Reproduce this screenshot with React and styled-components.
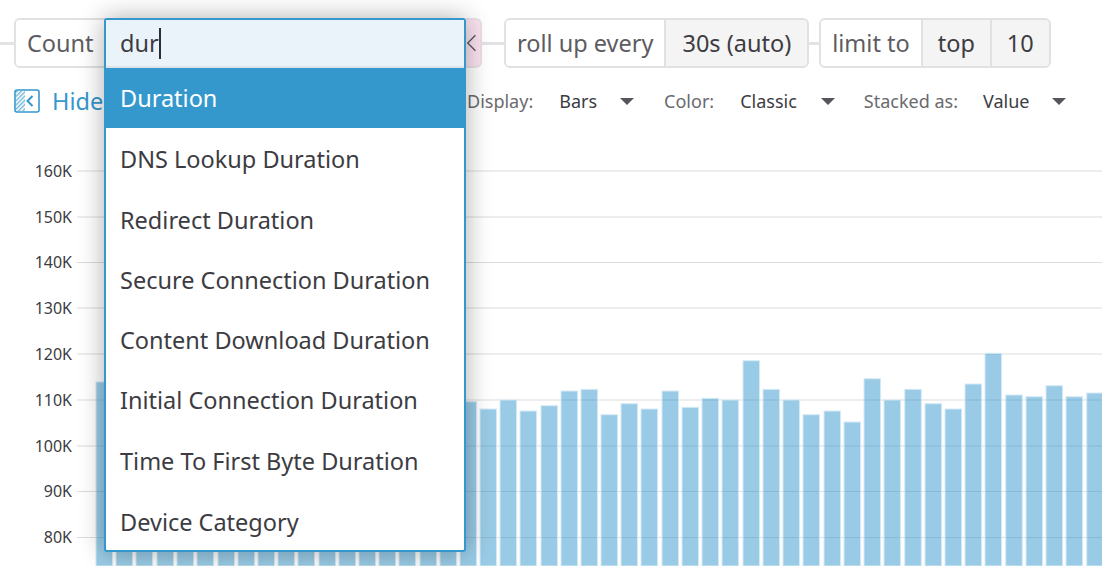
import React from 'react';
import styled, { createGlobalStyle } from 'styled-components';

const Global = createGlobalStyle`
  html, body { margin: 0; padding: 0; background: #fff; }
  body { width: 1102px; height: 566px; overflow: hidden; font-family: "Noto Sans", "Open Sans", sans-serif; color: #3c3c42; }
`;
const Page = styled.div`position: relative; width: 1102px; height: 566px; overflow: hidden; padding-top: 18px; box-sizing: border-box;`;
const QueryRow = styled.div`display: flex; align-items: center; height: 50px;`;
const Connector = styled.span`display: block; width: ${p => p.$w}px; height: 3px; background: #e3e3e6;`;
const Group = styled.div`display: flex; height: 50px; box-sizing: border-box; border: 2px solid #e1e1e4; border-radius: 6px; overflow: hidden; font-size: 23.5px; flex: ${p => p.$grow ? '0 0 ' + p.$grow + 'px' : 'none'};`;
const Label = styled.div`display: flex; align-items: center; padding: 0 11px; color: #5c5c62; background: ${p => p.$pink ? '#fbe3f0' : '#fff'};`;
const Value = styled.div`display: flex; align-items: center; padding: 0 ${p => p.$pad || 16}px; background: #f4f4f4; color: #3c3c42; border-left: 2px solid #e1e1e4;`;
const PinkTab = styled.div`display: flex; align-items: center; justify-content: flex-end; width: 16px; height: 50px; box-sizing: border-box; background: #fbe3f0; border: 2px solid #ecdfe8; border-left: 0; border-radius: 0 6px 6px 0; color: #55555c; padding-right: 2px;`;
const OptionsRow = styled.div`display: flex; align-items: center; height: 24px; margin-top: 21px; font-size: 18px; white-space: nowrap;`;
const HideButton = styled.div`display: flex; align-items: center; margin-left: 14px; width: 453px; color: #3498cd; font-size: 23.5px;`;
const HideIcon = styled.svg`width: 26px; height: 24px; margin-right: 12px; flex: none;`;
const OptName = styled.span`color: #6a6a70; margin-right: ${p => p.$gap}px;`;
const OptValue = styled.span`color: #3c3c42; margin-right: ${p => p.$gap}px;`;
const Caret = styled.span`flex: none; width: 0; height: 0; border-left: 7.5px solid transparent; border-right: 7.5px solid transparent; border-top: 7px solid #55555c; margin-right: ${p => p.$gap}px;`;
const Chart = styled.svg`display: block; position: absolute; left: 0; top: 0; pointer-events: none;`;
const AxisLabel = styled.text`font-size: 16px; fill: #3c3c42; text-anchor: end; font-family: "Noto Sans", sans-serif;`;
const Menu = styled.div`position: absolute; left: 104px; top: 18px; width: 362px; height: 534px; box-sizing: border-box; border: 2px solid #3498cd; border-radius: 3px; background: #fff; box-shadow: 0 0 26px rgba(0,0,0,.32); z-index: 2; font-size: 23.5px; display: flex; flex-direction: column;`;
const SearchBox = styled.div`flex: none; display: flex; align-items: center; height: 48px; box-sizing: border-box; padding-left: 14px; background: #ebf3fa; border-bottom: 2px solid #dfe3e8;`;
const Cursor = styled.span`display: inline-block; width: 2px; height: 31px; background: #2c2c32; margin-left: 0;`;
const Option = styled.div`flex: none; display: flex; align-items: center; height: ${p => p.$h || 60}px; padding-left: 14px; color: ${p => p.$active ? '#fff' : '#3c3c42'}; background: ${p => p.$active ? '#3498cd' : 'transparent'};`;

const bars = [[96,382],[116,400],[136,400],[157,400],[177,400],[197,400],[218,400],[238,400],[258,400],[278,400],[298,400],[319,400],[339,400],[359,400],[379,400],[399,400],[420,400],[440,400],[460,401.7],[480,409],[500,400],[520,411],[541,405.7],[561,391],[581,389.3],[601,414.7],[621,403.7],[641,409],[662,391],[682,407.3],[702,398.3],[722,400],[743,360.7],[763,389.3],[783,400],[803,414.7],[824,411],[844,422],[864,378.7],[884,400],[904.7,389.3],[925,403.7],[945,409],[965,384],[985,353.3],[1005.7,395],[1026,396.7],[1046,385.7],[1066,396.7],[1086.7,393]];
const ticks = [['160K',171],['150K',217],['140K',262.5],['130K',308],['120K',354],['110K',400],['100K',446],['90K',491.5],['80K',537.5]];
const options = [['DNS Lookup Duration',62],['Redirect Duration',60],['Secure Connection Duration',60],['Content Download Duration',60],['Initial Connection Duration',60],['Time To First Byte Duration',62],['Device Category',60]];

export default function App() {
  return (
    <Page>
      <Global />
      <Chart width="1102" height="566" viewBox="0 0 1102 566">
        {ticks.map(([l, y]) => (
          <g key={l}>
            <line x1="77" x2="1102" y1={y} y2={y} stroke="#dcdcdc" strokeWidth="1.2" />
            <AxisLabel x="72" y={y + 5.5}>{l}</AxisLabel>
          </g>
        ))}
        {bars.map(([x, y]) => (
          <rect key={x} x={x} y={y} width="16.6" height={566 - y} fill="#3498cd" fillOpacity=".5" stroke="#d6eaf5" strokeWidth="1" />
        ))}
      </Chart>
      <QueryRow style={{ position: 'relative' }}>
        <Connector $w={14} />
        <Group $grow={452}><Label>Count</Label></Group>
        <PinkTab>
          <svg width="14" height="24" viewBox="0 0 14 24"><path d="M11 3 L2 12 L11 21" fill="none" stroke="#55555c" strokeWidth="1.5" /></svg>
        </PinkTab>
        <Connector $w={22} />
        <Group><Label>roll up every</Label><Value>30s (auto)</Value></Group>
        <Connector $w={10} />
        <Group><Label>limit to</Label><Value $pad={15}>top</Value><Value $pad={15}>10</Value></Group>
      </QueryRow>
      <OptionsRow style={{ position: 'relative' }}>
        <HideButton>
          <HideIcon viewBox="0 0 26 24">
            <defs><pattern id="h" width="3" height="3" patternUnits="userSpaceOnUse" patternTransform="rotate(45)"><rect width="1.4" height="3" fill="#3498cd" fillOpacity=".7" /></pattern></defs>
            <rect x="1" y="1" width="24" height="22" rx="2" fill="#fff" stroke="#3498cd" strokeWidth="1.6" />
            <rect x="2" y="2" width="9" height="20" fill="url(#h)" />
            <path d="M18.5 7 L13.5 12 L18.5 17" fill="none" stroke="#3498cd" strokeWidth="2" />
          </HideIcon>
          Hide
        </HideButton>
        <OptName $gap={26}>Display:</OptName><OptValue $gap={23}>Bars</OptValue><Caret $gap={30} />
        <OptName $gap={26}>Color:</OptName><OptValue $gap={24}>Classic</OptValue><Caret $gap={29} />
        <OptName $gap={25}>Stacked as:</OptName><OptValue $gap={23}>Value</OptValue><Caret $gap={0} />
      </OptionsRow>
      <Menu>
        <SearchBox>dur<Cursor /></SearchBox>
        <Option $active>Duration</Option>
        {options.map(([t, h]) => <Option key={t} $h={h}>{t}</Option>)}
      </Menu>
    </Page>
  );
}
